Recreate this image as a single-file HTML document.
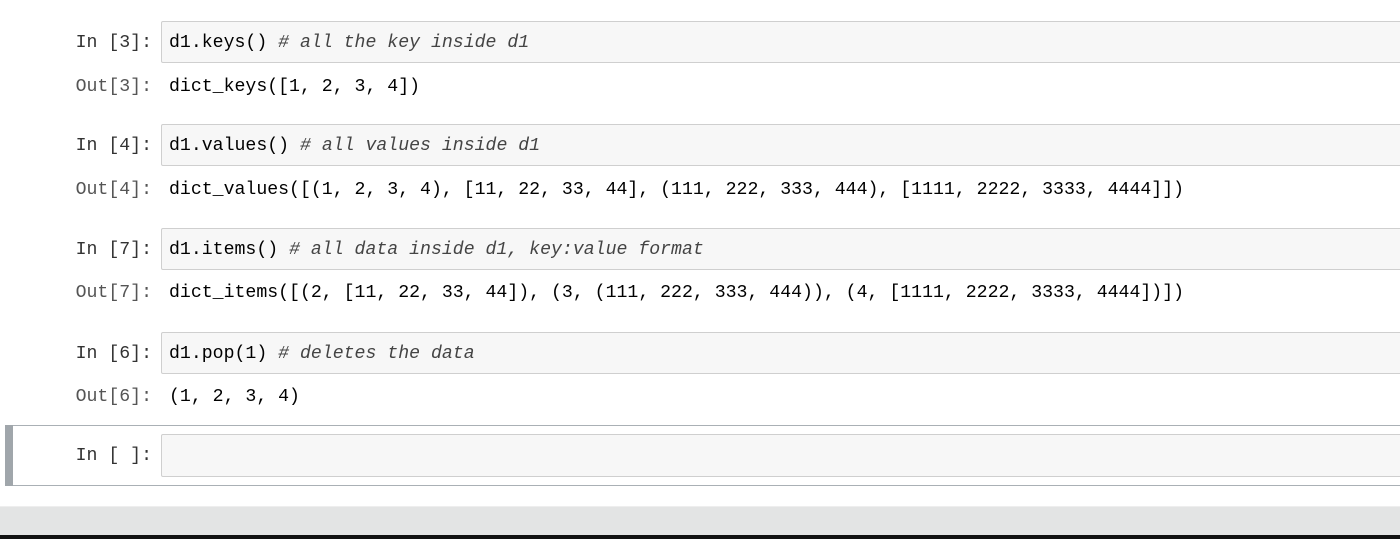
<!DOCTYPE html>
<html><head><style>
body{margin:0;width:1400px;height:539px;background:#fff;position:relative;overflow:hidden;font-family:"Liberation Mono",monospace;font-size:18.2px;}
.p{position:absolute;right:1248px;white-space:pre;}
.in{color:#333;}
.out{color:#555;}
.box{position:absolute;left:161px;width:1250px;height:42px;background:#f7f7f7;border:1px solid #cfcfcf;border-radius:2px;box-sizing:border-box;}
.t{position:absolute;left:169px;white-space:pre;color:#000;}
.c{font-style:italic;color:#444;}
</style></head><body>
<div class="box" style="top:21px"></div>
<div class="p in" style="top:33px">In [3]:</div>
<div class="t" style="top:33px">d1.keys() <span class="c"># all the key inside d1</span></div>
<div class="p out" style="top:77px">Out[3]:</div>
<div class="t" style="top:77px">dict_keys([1, 2, 3, 4])</div>

<div class="box" style="top:124px"></div>
<div class="p in" style="top:136px">In [4]:</div>
<div class="t" style="top:136px">d1.values() <span class="c"># all values inside d1</span></div>
<div class="p out" style="top:180px">Out[4]:</div>
<div class="t" style="top:180px">dict_values([(1, 2, 3, 4), [11, 22, 33, 44], (111, 222, 333, 444), [1111, 2222, 3333, 4444]])</div>

<div class="box" style="top:228px"></div>
<div class="p in" style="top:240px">In [7]:</div>
<div class="t" style="top:240px">d1.items() <span class="c"># all data inside d1, key:value format</span></div>
<div class="p out" style="top:283px">Out[7]:</div>
<div class="t" style="top:283px">dict_items([(2, [11, 22, 33, 44]), (3, (111, 222, 333, 444)), (4, [1111, 2222, 3333, 4444])])</div>

<div class="box" style="top:332px"></div>
<div class="p in" style="top:344px">In [6]:</div>
<div class="t" style="top:344px">d1.pop(1) <span class="c"># deletes the data</span></div>
<div class="p out" style="top:387px">Out[6]:</div>
<div class="t" style="top:387px">(1, 2, 3, 4)</div>

<div style="position:absolute;left:5px;top:425px;width:1400px;height:61px;border-top:1px solid #aab0b5;border-bottom:1px solid #aab0b5;box-sizing:border-box;"></div>
<div style="position:absolute;left:5px;top:425px;width:8px;height:61px;background:#a0a6ab;"></div>
<div class="box" style="top:434px;height:43px"></div>
<div class="p in" style="top:446px">In [ ]:</div>

<div style="position:absolute;left:0;top:506px;width:1400px;height:29px;background:#e3e4e4;border-top:1px solid #eee;"></div>
<div style="position:absolute;left:0;top:535px;width:1400px;height:4px;background:#111;"></div>
</body></html>
